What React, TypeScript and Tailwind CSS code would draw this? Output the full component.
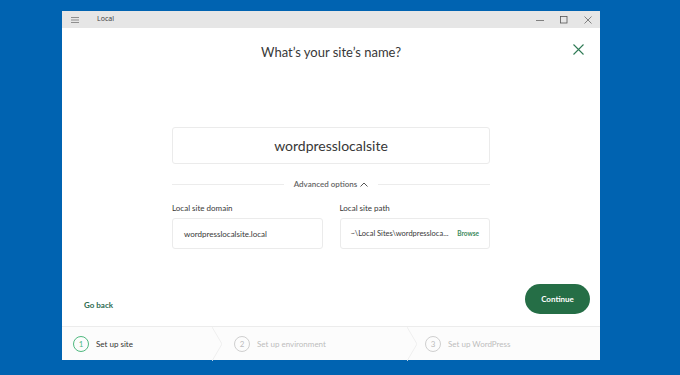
import React from 'react';

const font = { fontFamily: 'Lato, "Open Sans", sans-serif' };

function Chevron() {
  return (
    <svg width="10" height="34" viewBox="0 0 10 34" className="shrink-0 ml-auto">
      <polyline points="0,0 10,17 0,34" fill="none" stroke="#efefef" strokeWidth="1" />
    </svg>
  );
}

function Step({ n, label, active, width, pad, last }: { n: number; label: string; active?: boolean; width?: string; pad: string; last?: boolean }) {
  return (
    <div className={`flex items-center h-full ${width ?? 'flex-1'} ${pad}`}>
      <div
        className={`w-[16px] h-[16px] rounded-full border flex items-center justify-center text-[8px] ${
          active ? 'border-[#4fb97f] text-[#4fb97f]' : 'border-[#cfcfcf] text-[#bdbdbd]'
        }`}
      >
        {n}
      </div>
      <span className={`ml-[7px] text-[8px] ${active ? 'text-[#333]' : 'text-[#bdbdbd]'}`}>{label}</span>
      {!last && <Chevron />}
    </div>
  );
}

export default function App() {
  return (
    <div className="w-[680px] h-[375px] bg-[#0063b1] pt-[11px] pl-[62px]" style={font}>
      <div className="w-[538px] h-[349px] bg-white flex flex-col">
        {/* title bar */}
        <div className="h-[17px] bg-[#e6e6e6] flex items-center shrink-0">
          <svg width="8" height="6" viewBox="0 0 8 6" className="ml-[9px]">
            <path d="M0 0.5h8M0 3h8M0 5.5h8" stroke="#777" strokeWidth="0.8" />
          </svg>
          <span className="ml-[18px] text-[7px] text-[#444]" style={{ fontFamily: '"Noto Sans", sans-serif' }}>
            Local
          </span>
          <div className="ml-auto flex items-center">
            <svg width="8" height="8" viewBox="0 0 8 8">
              <path d="M0 4.5h8" stroke="#666" strokeWidth="0.8" />
            </svg>
            <svg width="8" height="8" viewBox="0 0 8 8" className="ml-[16px]">
              <rect x="0.5" y="0.5" width="6.5" height="6.5" fill="none" stroke="#555" strokeWidth="0.8" />
            </svg>
            <svg width="8" height="8" viewBox="0 0 8 8" className="ml-[16px] mr-[8px]">
              <path d="M0.5 0.5l7 7M7.5 0.5l-7 7" stroke="#666" strokeWidth="0.8" />
            </svg>
          </div>
        </div>

        {/* main */}
        <div className="relative flex-1 flex flex-col items-center">
          <svg width="11" height="11" viewBox="0 0 11 11" className="absolute right-[16px] top-[16px]">
            <path d="M0.5 0.5l10 10M10.5 0.5l-10 10" stroke="#2f7a55" strokeWidth="1.1" />
          </svg>

          <h1 className="mt-[16px] h-[16px] leading-[16px] text-[13px] text-[#383838]">What’s your site’s name?</h1>

          <div className="mt-[67px] w-[318px] h-[37px] border border-[#ebebeb] rounded-[3px] flex items-center justify-center text-[14px] text-[#383838]">
            wordpresslocalsite
          </div>

          <div className="mt-[14px] w-[318px] h-[12px] flex items-center">
            <div className="flex-1 h-px bg-[#ececec]" />
            <div className="px-[10px] flex items-center text-[8px] font-semibold text-[#666]">
              Advanced options
              <svg width="8" height="5" viewBox="0 0 8 5" className="ml-[3px]">
                <polyline points="0.5,4.5 4,1 7.5,4.5" fill="none" stroke="#555" strokeWidth="1" />
              </svg>
            </div>
            <div className="flex-1 h-px bg-[#ececec]" />
          </div>

          <div className="mt-[12px] w-[318px] grid grid-cols-2 gap-x-[17px]">
            <div className="flex flex-col">
              <span className="h-[12px] leading-[12px] text-[8px] text-[#383838]">Local site domain</span>
              <div className="mt-[4px] h-[31px] border border-[#ebebeb] rounded-[3px] flex items-center pl-[11px] text-[8px] text-[#383838]">
                wordpresslocalsite.local
              </div>
            </div>
            <div className="flex flex-col">
              <span className="h-[12px] leading-[12px] text-[8px] text-[#383838]">Local site path</span>
              <div className="mt-[4px] h-[31px] border border-[#ebebeb] rounded-[3px] flex items-center pl-[10px] pr-[10px] text-[7.5px] text-[#383838]">
                <span className="whitespace-nowrap">~\Local Sites\wordpressloca...</span>
                <span className="ml-auto pl-[4px] text-[6.5px] font-bold text-[#3d8a5c]">Browse</span>
              </div>
            </div>
          </div>

          <div className="mt-[35px] w-full flex items-center pl-[22px] pr-[10px]">
            <span className="mt-[12px] text-[8px] font-bold text-[#2d6a4f]">Go back</span>
            <button className="ml-auto w-[65px] h-[30px] rounded-full bg-[#256e46] text-white text-[8px] font-bold">
              Continue
            </button>
          </div>
        </div>

        {/* stepper */}
        <div className="h-[34px] shrink-0 border-t border-[#ececec] bg-[#fcfcfc] flex">
          <Step n={1} label="Set up site" active width="w-[160px]" pad="pl-[11px]" />
          <Step n={2} label="Set up environment" width="w-[195px]" pad="pl-[12px]" />
          <Step n={3} label="Set up WordPress" pad="pl-[8px]" last />
        </div>
      </div>
    </div>
  );
}
